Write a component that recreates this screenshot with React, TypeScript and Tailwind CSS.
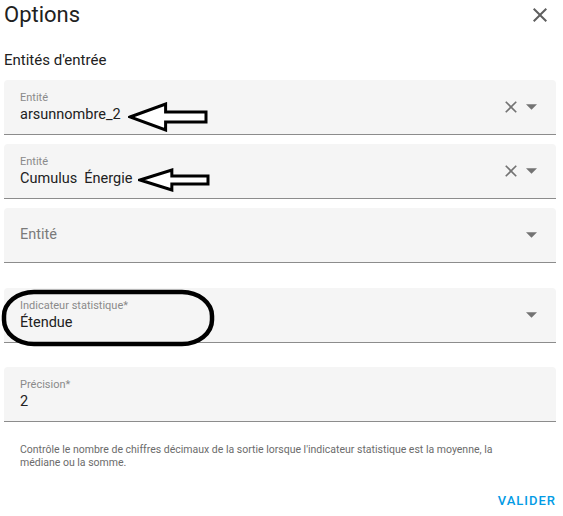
import React from 'react';

const CLOSE_D = 'M19 6.41 17.59 5 12 10.59 6.41 5 5 6.41 10.59 12 5 17.59 6.41 19 12 13.41 17.59 19 19 17.59 13.41 12z';

const ClearIcon = () => (
  <svg width="20" height="20" viewBox="0 0 24 24" className="text-[#737373]">
    <path d={CLOSE_D} fill="currentColor" />
  </svg>
);

const DropIcon = () => (
  <svg width="11" height="6" viewBox="0 0 10 5" className="text-[#737373]">
    <path d="M0 0h10L5 5z" fill="currentColor" />
  </svg>
);

const Field = ({
  label,
  value,
  clearable,
  dropdown,
  children,
}: {
  label?: string;
  value?: string;
  clearable?: boolean;
  dropdown?: boolean;
  children?: React.ReactNode;
}) => {
  return (
    <div className="relative h-[55px] bg-[#f5f5f5] rounded-t-[4px] border-b border-[#8c8c8c] flex items-center pl-4 pr-[19px]">
      <div className="flex-1">
        {value !== undefined ? (
          <div className="pt-[2px]">
            <div className="text-[11px] leading-[14px] text-[#8a8a8a]">{label}</div>
            <div className="text-[14.5px] leading-[20px] text-[#212121] whitespace-pre">{value}</div>
          </div>
        ) : (
          <div className="text-[14.5px] leading-[20px] text-[#7a7a7a]">{label}</div>
        )}
      </div>
      <div className="flex items-center gap-[5px]">
        {clearable && <ClearIcon />}
        {dropdown && <DropIcon />}
      </div>
      {children}
    </div>
  );
};

const Arrow = ({ className, w, h }: { className: string; w: number; h: number }) => (
  <svg className={className} width={w} height={h} viewBox={`0 0 ${w} ${h}`}>
    <path
      d={`M2 ${h / 2} L${w * 0.47} 2 L${w * 0.47} ${h * 0.33} L${w - 2} ${h * 0.33} L${w - 2} ${h * 0.67} L${w * 0.47} ${h * 0.67} L${w * 0.47} ${h - 2} Z`}
      fill="white"
      stroke="black"
      strokeWidth="3"
    />
  </svg>
);

export default function App() {
  return (
    <div className="w-[563px] h-[516px] bg-white pl-1 pr-[7px] font-['Roboto',sans-serif]">
      <div className="h-[30px] flex items-center justify-between">
        <span className="text-[22px] leading-[30px] text-[#212121]">Options</span>
        <svg width="24" height="24" viewBox="0 0 24 24" className="mr-[4px] text-[#5f5f5f]">
          <path d={CLOSE_D} fill="currentColor" />
        </svg>
      </div>
      <div className="mt-5 text-[15px] leading-5 text-[#212121]">Entités d'entrée</div>
      <div className="mt-[10px] flex flex-col gap-[9px]">
        <Field label="Entité" value="arsunnombre_2" clearable dropdown>
          <Arrow className="absolute left-[124px] top-[22px]" w={80} h={30} />
        </Field>
        <Field label="Entité" value="Cumulus  Énergie" clearable dropdown>
          <Arrow className="absolute left-[134px] top-[24px]" w={72} h={24} />
        </Field>
        <Field label="Entité" dropdown />
      </div>
      <div className="mt-[25px]">
        <Field label="Indicateur statistique*" value="Étendue" dropdown>
          <svg className="absolute -left-[3px] top-[1px]" width="214" height="58" viewBox="0 0 214 58">
            <rect x="3" y="3" width="208" height="52" rx="30" ry="24" fill="none" stroke="black" strokeWidth="4.5" />
          </svg>
        </Field>
      </div>
      <div className="mt-[24px]">
        <Field label="Précision*" value="2" />
      </div>
      <p className="mt-[21px] pl-4 pr-[50px] text-[10.5px] leading-[13px] text-[#6b6b6b]">
        Contrôle le nombre de chiffres décimaux de la sortie lorsque l'indicateur statistique est la moyenne, la médiane ou la somme.
      </p>
      <div className="mt-[22px] flex justify-end">
        <span className="text-[13px] leading-5 font-medium tracking-[1px] text-[#039be5]">VALIDER</span>
      </div>
    </div>
  );
}
